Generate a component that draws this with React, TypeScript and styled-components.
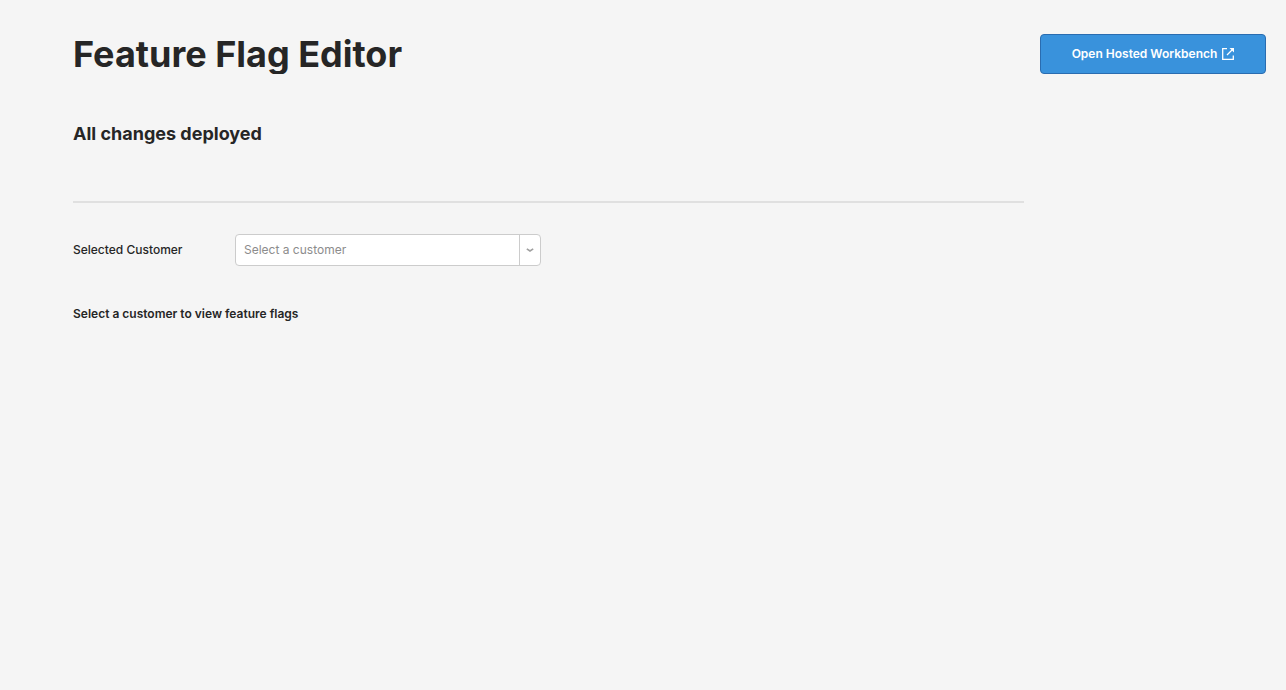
import React from "react";
import styled, { createGlobalStyle } from "styled-components";

const GlobalStyle = createGlobalStyle`
  * { box-sizing: border-box; }
  html { background: #f5f5f5; }
  body {
    margin: 0;
    color: #262626;
    font: 400 12px/16px Inter, "Liberation Sans", sans-serif;
  }
`;

const Page = styled.main`
  display: grid;
  grid-template-columns: 1fr 226px;
  column-gap: 16px;
  padding: 34px 20px 32px 73px;
`;

const Title = styled.h1`
  margin: 0;
  overflow: hidden;
  font-size: 36px;
  line-height: 40px;
  font-weight: 700;
`;

const Status = styled.h2`
  margin: 0;
  padding: 48px 0 55px;
  border-bottom: 2px solid #e0e0e0;
  font-size: 18px;
  line-height: 24px;
  font-weight: 700;
`;

const WorkbenchButton = styled.button`
  display: flex;
  align-items: center;
  justify-content: center;
  gap: 5px;
  width: 100%;
  height: 40px;
  border: 1px solid #2a6cb0;
  border-radius: 4px;
  background: #3992dc;
  color: #fff;
  font: inherit;
  font-weight: 600;
  cursor: pointer;
`;

const Field = styled.div`
  display: grid;
  grid-template-columns: 162px 306px;
  align-items: center;
  margin-top: 31px;
`;

const Label = styled.label`
  font-weight: 500;
`;

const SelectBox = styled.div`
  display: grid;
  grid-template-columns: 1fr 21px;
  height: 32px;
  overflow: hidden;
  border: 1px solid #cccccc;
  border-radius: 4px;
  background: #fff;
`;

const Select = styled.select`
  grid-area: 1 / 1 / 2 / 3;
  appearance: none;
  padding: 0 30px 0 8px;
  border: 0;
  background: transparent;
  color: #8c8c8c;
  font: inherit;
`;

const Toggle = styled.span`
  grid-area: 1 / 2;
  display: flex;
  align-items: center;
  justify-content: center;
  border-left: 1px solid #cccccc;
  pointer-events: none;
`;

const Hint = styled.p`
  margin: 40px 0 0;
  font-weight: 600;
`;

export default function App() {
  return (
    <>
      <GlobalStyle />
      <Page>
        <div>
          <Title>Feature Flag Editor</Title>
          <Status>All changes deployed</Status>
          <Field>
            <Label htmlFor="customer">Selected Customer</Label>
            <SelectBox>
              <Select id="customer" defaultValue="">
                <option value="">Select a customer</option>
              </Select>
              <Toggle>
                <svg width="8" height="6" viewBox="0 0 8 6" fill="none" stroke="#a0a0a0" strokeWidth="1.6" aria-hidden="true">
                  <path d="M.8 1.8 4 4 7.2 1.8" />
                </svg>
              </Toggle>
            </SelectBox>
          </Field>
          <Hint>Select a customer to view feature flags</Hint>
        </div>
        <div>
          <WorkbenchButton type="button">
            Open Hosted Workbench
            <svg width="12" height="12" viewBox="0 0 12 12" fill="none" stroke="currentColor" strokeWidth="1.3" aria-hidden="true">
              <path d="M5 .7H.7V11.3H11.3V7.5M5 7 10 2" />
              <path d="M7.5 0H12V4.5Z" fill="currentColor" stroke="none" />
            </svg>
          </WorkbenchButton>
        </div>
      </Page>
    </>
  );
}
